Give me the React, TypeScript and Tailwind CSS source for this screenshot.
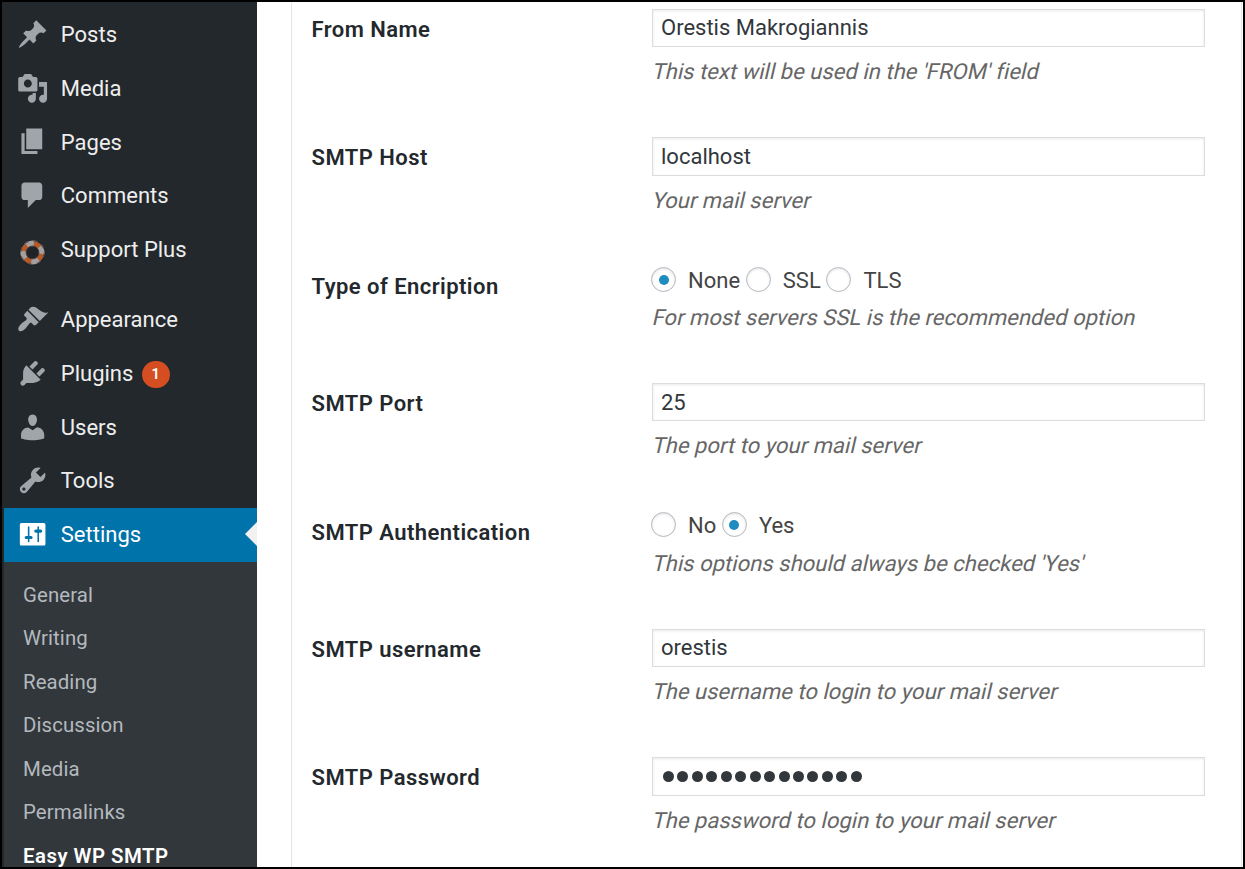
import React from "react";

const icons: Record<string, string> = {
  Posts:
    "M10.44 3.02l1.82-1.82 6.36 6.35-1.83 1.82c-1.05-.68-2.48-.57-3.41.36l-.75.75c-.92.93-1.04 2.35-.35 3.41l-1.83 1.82-2.41-2.41-2.8 2.79c-.42.42-3.38 2.71-3.8 2.29s1.86-3.39 2.28-3.81l2.79-2.79L4.1 9.36l1.83-1.82c1.05.69 2.48.57 3.4-.36l.75-.75c.93-.92 1.05-2.35.36-3.41z",
  Media:
    "M13 11V4c0-.55-.45-1-1-1h-1.67L9 1H5L3.67 3H2c-.55 0-1 .45-1 1v7c0 .55.45 1 1 1h10c.55 0 1-.45 1-1zM7 4.5c1.38 0 2.5 1.12 2.5 2.5S8.38 9.5 7 9.5 4.5 8.38 4.5 7 5.62 4.5 7 4.5zM14 6h5v10.5c0 1.38-1.12 2.5-2.5 2.5S14 17.88 14 16.5s1.12-2.5 2.5-2.5c.17 0 .34.02.5.05V9h-3V6zm-4 8.05V13h2v3.5c0 1.38-1.12 2.5-2.5 2.5S7 17.88 7 16.5 8.12 14 9.5 14c.17 0 .34.02.5.05z",
  Pages: "M6 15V2h10v13H6zm-1 1h8v2H3V5h2v11z",
  Comments:
    "M5 2h9c1.1 0 2 .9 2 2v7c0 1.1-.9 2-2 2h-2l-5 5v-5H5c-1.1 0-2-.9-2-2V4c0-1.1.9-2 2-2z",
  Appearance:
    "M14.48 11.06L7.41 3.99l1.5-1.5c.5-.56 2.3-.47 3.51.32 1.21.8 1.43 1.28 2.91 2.1 1.18.64 2.45 1.26 4.45.85zm-.71.71L6.7 4.7 4.93 6.47c-.39.39-.39 1.02 0 1.41l1.06 1.06c.39.39.39 1.03 0 1.42-.6.6-1.43 1.11-2.21 1.69-.35.26-.7.53-1.01.84C1.43 14.23.4 16.08 1.4 17.07c.99 1 2.84-.03 4.18-1.36.31-.31.58-.66.85-1.02.57-.78 1.08-1.61 1.69-2.21.39-.39 1.02-.39 1.41 0l1.06 1.06c.39.39 1.02.39 1.41 0z",
  Plugins:
    "M13.11 4.36L9.87 7.6 8 5.73l3.24-3.24c.35-.34 1.05-.2 1.56.32.52.51.66 1.21.31 1.55zm-8 1.77l.91-1.12 9.01 9.01-1.19.84c-.71.71-2.63 1.16-3.82 1.16H6.14L4.9 17.26c-.59.59-1.54.59-2.12 0-.59-.58-.59-1.53 0-2.12l1.24-1.24v-3.88c0-1.13.4-3.19 1.09-3.89zm7.26 3.97l3.24-3.24c.34-.35 1.04-.21 1.55.31.52.51.66 1.21.31 1.55l-3.24 3.25z",
  Users:
    "M10 9.25c-2.27 0-2.73-3.44-2.73-3.44C7 4.02 7.82 2 9.97 2c2.16 0 2.98 2.02 2.71 3.81 0 0-.41 3.44-2.68 3.44zm0 2.57L12.72 10c2.39 0 4.52 2.33 4.52 4.53v2.49s-3.65 1.13-7.24 1.13c-3.65 0-7.24-1.13-7.24-1.13v-2.49c0-2.25 1.94-4.48 4.47-4.48z",
  Tools:
    "M16.68 9.77c-1.34 1.34-3.3 1.67-4.95.99l-5.41 6.52c-.99.99-2.59.99-3.58 0s-.99-2.59 0-3.57l6.52-5.42c-.68-1.65-.35-3.61.99-4.95 1.28-1.28 3.12-1.62 4.72-1.06l-2.89 2.89 2.82 2.82 2.86-2.87c.53 1.58.18 3.39-1.08 4.65zM3.81 16.21c.4.39 1.04.39 1.43 0 .4-.4.4-1.04 0-1.43-.39-.4-1.03-.4-1.43 0-.39.39-.39 1.03 0 1.43z",
  Settings:
    "M18 16V4c0-.55-.45-1-1-1H3c-.55 0-1 .45-1 1v12c0 .55.45 1 1 1h14c.55 0 1-.45 1-1zM8 11h1c.55 0 1 .45 1 1s-.45 1-1 1H8v1.5c0 .28-.22.5-.5.5s-.5-.22-.5-.5V13H6c-.55 0-1-.45-1-1s.45-1 1-1h1V5.5c0-.28.22-.5.5-.5s.5.22.5.5V11zm5-2h-1c-.55 0-1-.45-1-1s.45-1 1-1h1V5.5c0-.28.22-.5.5-.5s.5.22.5.5V7h1c.55 0 1 .45 1 1s-.45 1-1 1h-1v5.5c0 .28-.22.5-.5.5s-.5-.22-.5-.5V9z",
};

function LifebuoyIcon() {
  return (
    <svg viewBox="-0.5 -0.5 32 32" className="mt-1 size-8 shrink-0" fill="none">
      <circle cx="16" cy="16.5" r="13" fill="#1c2024" opacity=".6" />
      <circle cx="16" cy="16" r="9" stroke="#b3592a" strokeWidth="5.2" />
      <circle
        cx="16"
        cy="16"
        r="9.2"
        stroke="#a3a09f"
        strokeWidth="5.8"
        strokeDasharray="7.6 6.85"
        transform="rotate(50 16 16)"
      />
      <circle cx="16" cy="16" r="11.8" stroke="#55504e" strokeWidth="1.2" strokeDasharray="5 4.27" />
      <circle cx="16" cy="16" r="6.4" stroke="#4a3a32" strokeWidth="1" />
    </svg>
  );
}

function MenuItem({ name, active, badge }: { name: string; active?: boolean; badge?: string }) {
  return (
    <li
      className={
        active
          ? "relative ml-0.5 flex h-[54px] items-center bg-[#0073aa] pl-[11.8px] text-white"
          : "flex h-[53.7px] items-center pl-[13.8px] text-[#eee]"
      }
    >
      {name === "Support Plus" ? (
        <LifebuoyIcon />
      ) : (
        <svg viewBox="-0.4 -0.2 20 20" className="-mt-0.5 size-8 shrink-0" fill={active ? "#fff" : "#a0a5aa"}>
          <path d={icons[name]} />
        </svg>
      )}
      <span className="mt-[0.3px] ml-[13px] text-[22px] leading-8">{name}</span>
      {badge && (
        <span className="mt-px ml-[8.4px] flex h-[27px] w-7 items-center justify-center rounded-full bg-[#d54e21] pt-px text-[14.5px] font-semibold text-white">
          {badge}
        </span>
      )}
      {active && (
        <svg viewBox="0 0 12 24" className="absolute top-[14px] right-0 h-6 w-3">
          <path d="M12 0v24L0 12z" fill="#f1f1f1" />
        </svg>
      )}
    </li>
  );
}

function Row({ label, height, children, note }: { label: string; height: string; children: React.ReactNode; note: string }) {
  return (
    <div className={`flex shrink-0 pl-[19.5px] ${height}`}>
      <div className="w-[340.5px] shrink-0 pt-4 text-[22px] leading-7 font-semibold tracking-[0.45px] text-[#23282d]">
        {label}
      </div>
      <div>
        {children}
        <p className="w-fit skew-x-[-13deg] pl-px text-[22px] leading-7 tracking-[0.02px] text-[#666]">{note}</p>
      </div>
    </div>
  );
}

function Field({ value, password, size }: { value: string; password?: boolean; size: string }) {
  return (
    <div
      className={`mt-[9px] mb-[11px] flex w-[553px] items-center border border-[#ddd] bg-white pl-2 text-[22px] leading-8 text-[#32373c] shadow-[inset_0_1px_3px_rgba(0,0,0,0.09)] ${size}`}
    >
      {password ? (
        <span className="flex gap-[3.45px] pl-0.5" aria-label="password">
          {Array.from({ length: 14 }, (_, i) => (
            <span key={i} className="size-[11px] rounded-full bg-[#32373c]" />
          ))}
        </span>
      ) : (
        <span>{value}</span>
      )}
    </div>
  );
}

function Radios({ options, selected, top }: { options: string[]; selected: string; top: string }) {
  return (
    <div className={`-ml-px flex h-7 items-center gap-[5.7px] text-[22px] leading-7 text-[#444] ${top}`}>
      {options.map((o) => (
        <label key={o} className="flex items-center">
          <span className="-mt-[3px] flex size-[25px] items-center justify-center rounded-full border border-[#b4b9be] bg-white shadow-[inset_0_1px_3px_rgba(0,0,0,0.12)]">
            {o === selected && <span className="size-2.5 rounded-full bg-[#1e8cbe]" />}
          </span>
          <span className="ml-3">{o}</span>
        </label>
      ))}
    </div>
  );
}

export default function App() {
  return (
    <div className="flex h-[869px] w-[1245px] overflow-hidden border-2 border-black bg-white font-[Roboto,sans-serif]">
      <aside className="w-[255px] shrink-0 overflow-hidden bg-[#23282d]">
        <ul className="pt-[6.2px]">
          <MenuItem name="Posts" />
          <MenuItem name="Media" />
          <MenuItem name="Pages" />
          <MenuItem name="Comments" />
          <MenuItem name="Support Plus" />
          <li className="h-[16.7px]" />
          <MenuItem name="Appearance" />
          <MenuItem name="Plugins" badge="1" />
          <MenuItem name="Users" />
          <MenuItem name="Tools" />
          <MenuItem name="Settings" active />
        </ul>
        <ul className="ml-0.5 h-[320px] bg-[#32373c] pt-[11px] pl-[19px] text-[20.4px] tracking-[0.1px] text-[#b4b9be]">
          {["General", "Writing", "Reading", "Discussion", "Media", "Permalinks"].map((s) => (
            <li key={s} className="flex h-[43.5px] items-center">
              {s}
            </li>
          ))}
          <li className="flex h-[43.5px] items-center font-semibold tracking-[0.48px] text-white">Easy WP SMTP</li>
        </ul>
      </aside>
      <main className="-mt-0.5 ml-[34px] flex w-[951px] shrink-0 flex-col border-x border-[#e5e5e5]">
        <Row label="From Name" height="h-[128px]" note="This text will be used in the 'FROM' field">
          <Field value="Orestis Makrogiannis" size="h-[38px]" />
        </Row>
        <Row label="SMTP Host" height="h-[129px]" note="Your mail server">
          <Field value="localhost" size="h-[39px]" />
        </Row>
        <Row label="Type of Encription" height="h-[117px]" note="For most servers SSL is the recommended option">
          <Radios options={["None", "SSL", "TLS"]} selected="None" top="mt-[10px] mb-[9px]" />
        </Row>
        <Row label="SMTP Port" height="h-[129px]" note="The port to your mail server">
          <Field value="25" size="h-[38px] pt-0.5" />
        </Row>
        <Row label="SMTP Authentication" height="h-[117px]" note="This options should always be checked 'Yes'">
          <Radios options={["No", "Yes"]} selected="Yes" top="mt-[9px] mb-[10px]" />
        </Row>
        <Row label="SMTP username" height="h-[128px]" note="The username to login to your mail server">
          <Field value="orestis" size="h-[38px]" />
        </Row>
        <Row label="SMTP Password" height="h-[119px]" note="The password to login to your mail server">
          <Field value="" password size="h-[39px]" />
        </Row>
      </main>
    </div>
  );
}
